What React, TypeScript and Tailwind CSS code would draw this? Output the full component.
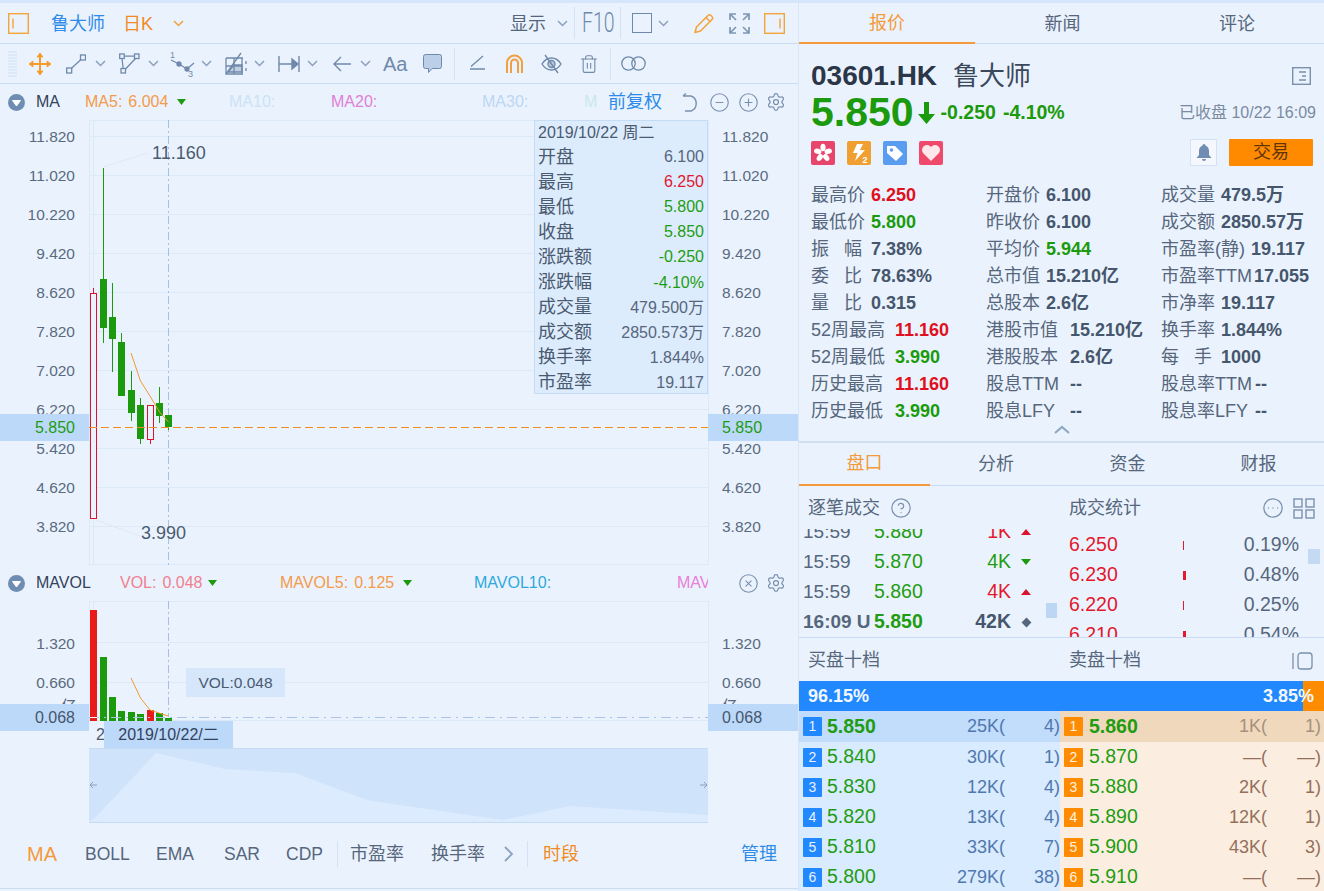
import { CircleEllipsis, CircleHelp, CircleMinus, CirclePlus, CircleX, Settings, Trash2 } from "lucide-react";
import type { ReactNode } from "react";

const axisMain = ["11.820", "11.020", "10.220", "9.420", "8.620", "7.820", "7.020", "6.220", "5.420", "4.620", "3.820"];

const candles = [
  { x: 90, top: 293, bottom: 518, high: 288, low: 519, up: true },
  { x: 100, top: 279, bottom: 328, high: 168, low: 343, up: false },
  { x: 109, top: 317, bottom: 339, high: 283, low: 372, up: false },
  { x: 118, top: 342, bottom: 396, high: 333, low: 396, up: false },
  { x: 128, top: 390, bottom: 413, high: 371, low: 421, up: false },
  { x: 137, top: 405, bottom: 439, high: 398, low: 444, up: false },
  { x: 147, top: 405, bottom: 439, high: 405, low: 444, up: true },
  { x: 156, top: 403, bottom: 416, high: 387, low: 423, up: false },
  { x: 165, top: 415, bottom: 427, high: 415, low: 430, up: false },
];

const volBars = [
  { x: 90, top: 610, up: true },
  { x: 100, top: 657, up: false },
  { x: 109, top: 697, up: false },
  { x: 118, top: 711, up: false },
  { x: 128, top: 712, up: false },
  { x: 137, top: 714, up: false },
  { x: 147, top: 710, up: true },
  { x: 156, top: 713, up: false },
  { x: 165, top: 718, up: false },
];

const tooltipRows = [
  ["开盘", "6.100", "text-[#56667c]"],
  ["最高", "6.250", "text-[#e2182e]"],
  ["最低", "5.800", "text-[#1f9c12]"],
  ["收盘", "5.850", "text-[#1f9c12]"],
  ["涨跌额", "-0.250", "text-[#1f9c12]"],
  ["涨跌幅", "-4.10%", "text-[#1f9c12]"],
  ["成交量", "479.500万", "text-[#56667c]"],
  ["成交额", "2850.573万", "text-[#56667c]"],
  ["换手率", "1.844%", "text-[#56667c]"],
  ["市盈率", "19.117", "text-[#56667c]"],
];

const DARK = "text-[#46566c]";
const RED = "text-[#e01020]";
const GREEN = "text-[#1a9a0c]";

const statRows = [
  [
    { label: "最高价", value: "6.250", color: RED, w: "w-[60px]" },
    { label: "开盘价", value: "6.100", color: DARK, w: "w-[60px]" },
    { label: "成交量", value: "479.5万", color: DARK, w: "w-[60px]" },
  ],
  [
    { label: "最低价", value: "5.800", color: GREEN, w: "w-[60px]" },
    { label: "昨收价", value: "6.100", color: DARK, w: "w-[60px]" },
    { label: "成交额", value: "2850.57万", color: DARK, w: "w-[60px]" },
  ],
  [
    { label: "振 幅", value: "7.38%", color: DARK, w: "w-[60px]" },
    { label: "平均价", value: "5.944", color: GREEN, w: "w-[60px]" },
    { label: "市盈率(静)", value: "19.117", color: DARK, w: "w-[90px]" },
  ],
  [
    { label: "委 比", value: "78.63%", color: DARK, w: "w-[60px]" },
    { label: "总市值", value: "15.210亿", color: DARK, w: "w-[60px]" },
    { label: "市盈率TTM", value: "17.055", color: DARK, w: "w-[93px]" },
  ],
  [
    { label: "量 比", value: "0.315", color: DARK, w: "w-[60px]" },
    { label: "总股本", value: "2.6亿", color: DARK, w: "w-[60px]" },
    { label: "市净率", value: "19.117", color: DARK, w: "w-[60px]" },
  ],
  [
    { label: "52周最高", value: "11.160", color: RED, w: "w-[84px]" },
    { label: "港股市值", value: "15.210亿", color: DARK, w: "w-[84px]" },
    { label: "换手率", value: "1.844%", color: DARK, w: "w-[60px]" },
  ],
  [
    { label: "52周最低", value: "3.990", color: GREEN, w: "w-[84px]" },
    { label: "港股股本", value: "2.6亿", color: DARK, w: "w-[84px]" },
    { label: "每 手", value: "1000", color: DARK, w: "w-[60px]" },
  ],
  [
    { label: "历史最高", value: "11.160", color: RED, w: "w-[84px]" },
    { label: "股息TTM", value: "--", color: DARK, w: "w-[84px]" },
    { label: "股息率TTM", value: "--", color: DARK, w: "w-[94px]" },
  ],
  [
    { label: "历史最低", value: "3.990", color: GREEN, w: "w-[84px]" },
    { label: "股息LFY", value: "--", color: DARK, w: "w-[84px]" },
    { label: "股息率LFY", value: "--", color: DARK, w: "w-[94px]" },
  ],
];

const trades = [
  { time: "15:59", price: "5.880", vol: "1K", dir: "up" },
  { time: "15:59", price: "5.870", vol: "4K", dir: "down" },
  { time: "15:59", price: "5.860", vol: "4K", dir: "up" },
  { time: "16:09 U", price: "5.850", vol: "42K", dir: "flat" },
];

const priceStats = [
  { price: "6.250", wide: false, pct: "0.19%" },
  { price: "6.230", wide: true, pct: "0.48%" },
  { price: "6.220", wide: false, pct: "0.25%" },
  { price: "6.210", wide: true, pct: "0.54%" },
];

const book = [
  { bid: "5.850", bidVol: "25K(", bidCount: "4)", ask: "5.860", askVol: "1K(", askCount: "1)" },
  { bid: "5.840", bidVol: "30K(", bidCount: "1)", ask: "5.870", askVol: "—(", askCount: "—)" },
  { bid: "5.830", bidVol: "12K(", bidCount: "4)", ask: "5.880", askVol: "2K(", askCount: "1)" },
  { bid: "5.820", bidVol: "13K(", bidCount: "4)", ask: "5.890", askVol: "12K(", askCount: "1)" },
  { bid: "5.810", bidVol: "33K(", bidCount: "7)", ask: "5.900", askVol: "43K(", askCount: "3)" },
  { bid: "5.800", bidVol: "279K(", bidCount: "38)", ask: "5.910", askVol: "—(", askCount: "—)" },
];

function Chevron({ className = "text-[#8aa0bc]" }: { className?: string }) {
  return (
    <svg width="11" height="7" viewBox="0 0 11 7" fill="none" className={className}>
      <path d="M1 1l4.5 4.5L10 1" stroke="currentColor" strokeWidth="1.5" />
    </svg>
  );
}

function Sep({ className = "h-[32px]" }: { className?: string }) {
  return <div className={`w-px bg-[#d3e2f4] ${className}`} />;
}

function DownBadge() {
  return (
    <svg width="17" height="17" viewBox="0 0 17 17">
      <circle cx="8.5" cy="8.5" r="8.5" fill="#6f8db2" />
      <path d="M4.5 6.5h8L8.5 12z" fill="#fff" stroke="#fff" strokeLinejoin="round" />
    </svg>
  );
}

function TriDown() {
  return (
    <svg width="9" height="6" viewBox="0 0 9 6">
      <path d="M0 0h9L4.5 6z" fill="#1a9a0c" />
    </svg>
  );
}

function GearIcon() {
  return <Settings size={20} strokeWidth={1.5} className="text-[#7a90ad]" />;
}

// one fixed-width slot, keeps the toolbars on their columns
function Slot({ w, children }: { w: string; children?: ReactNode }) {
  return <div className={`flex shrink-0 items-center whitespace-nowrap ${w}`}>{children}</div>;
}

function Header() {
  return (
    <div className="flex h-[41px] items-center border-b border-[#c9dcf3] pl-[8px]">
      <Slot w="w-[43px]">
        <svg width="21" height="21" viewBox="0 0 21 21" fill="none" stroke="#f5a33b" strokeWidth="1.4">
          <rect x="0.7" y="0.7" width="19.6" height="19.6" />
          <path d="M5 5.5v10" />
        </svg>
      </Slot>
      <Slot w="w-[72px]">
        <span className="translate-y-px text-[18px] text-[#2f8bea]">鲁大师</span>
      </Slot>
      <Slot w="w-[50px]">
        <span className="translate-y-px text-[18px] text-[#f08a24]">日K</span>
      </Slot>
      <Slot w="w-[337px]">
        <Chevron className="text-[#f0a040]" />
      </Slot>
      <Slot w="w-[47px]">
        <span className="translate-y-px text-[18px] text-[#56667c]">显示</span>
      </Slot>
      <Slot w="w-[17px]">
        <Chevron />
      </Slot>
      <Slot w="w-[8px]">
        <Sep />
      </Slot>
      <Slot w="w-[38px]">
        <span className="origin-left scale-x-[0.72] font-['Roboto',sans-serif] text-[27px] font-light text-[#7089aa]">F10</span>
      </Slot>
      <Slot w="w-[12px]">
        <Sep />
      </Slot>
      <Slot w="w-[26px]">
        <div className="h-[20px] w-[20px] border-[1.5px] border-[#6f89aa]" />
      </Slot>
      <Slot w="w-[35px]">
        <Chevron />
      </Slot>
      <Slot w="w-[36px]">
        <svg width="22" height="22" viewBox="0 0 22 22" fill="none" stroke="#f5a33b" strokeWidth="1.6" strokeLinejoin="round">
          <path d="M2 20.5l1.5-5.5L15 3.5a2 2 0 0 1 3 0l1 1a2 2 0 0 1 0 3L7.5 19z" />
          <path d="M13 5.5l4 4" />
        </svg>
      </Slot>
      <Slot w="w-[35px]">
        <svg width="21" height="21" viewBox="0 0 21 21" fill="none" stroke="#7e97b6" strokeWidth="1.7">
          <path d="M1 7V1h6M1 1l6 6M14 1h6v6M20 1l-6 6M1 14v6h6M1 20l6-6M14 20h6v-6M20 20l-6-6" />
        </svg>
      </Slot>
      <Slot w="w-[21px]">
        <svg width="21" height="21" viewBox="0 0 21 21" fill="none" stroke="#f5a33b" strokeWidth="1.4">
          <rect x="0.7" y="0.7" width="19.6" height="19.6" />
          <path d="M16 5.5v10" />
        </svg>
      </Slot>
    </div>
  );
}

function Toolbar() {
  const stroke = "#7089aa";
  return (
    <div className="flex h-[40px] items-center border-b border-[#c9dcf3] pl-[8px]">
      <Slot w="w-[20px]">
        <svg width="9" height="26" viewBox="0 0 9 26" stroke="#cfe0f3" strokeWidth="1">
          <path d="M0 1h9M0 4h9M0 7h9M0 10h9M0 13h9M0 16h9M0 19h9M0 22h9M0 25h9" />
        </svg>
      </Slot>
      <Slot w="w-[38px]">
        <svg width="24" height="24" viewBox="0 0 24 24" fill="#f59a2c" stroke="#f59a2c" strokeWidth="2">
          <path d="M12 3v18M3 12h18" fill="none" />
          <path d="M12 1l3 4H9zM12 23l3-4H9zM1 12l4-3v6zM23 12l-4-3v6z" strokeWidth="0.8" strokeLinejoin="round" />
        </svg>
      </Slot>
      <Slot w="w-[29px]">
        <svg width="20" height="20" viewBox="0 0 20 20" fill="none" stroke={stroke} strokeWidth="1.3">
          <rect x="0.7" y="14" width="5" height="5" />
          <rect x="14.5" y="1" width="5" height="5" />
          <path d="M5.5 14.2L14.7 5.8" />
        </svg>
      </Slot>
      <Slot w="w-[24px]">
        <Chevron />
      </Slot>
      <Slot w="w-[29px]">
        <svg width="21" height="21" viewBox="0 0 21 21" fill="none" stroke={stroke} strokeWidth="1.3">
          <rect x="0.7" y="1" width="4.5" height="4.5" />
          <rect x="15.5" y="1" width="4.5" height="4.5" />
          <rect x="2" y="15.5" width="4.5" height="4.5" />
          <path d="M5.2 3.2h10.3M3 5.5l1.2 10M16.5 5.5L6.5 16" />
        </svg>
      </Slot>
      <Slot w="w-[22px]">
        <Chevron />
      </Slot>
      <Slot w="w-[31px]">
        <svg width="26" height="26" viewBox="0 0 26 26" fill="none" stroke={stroke} strokeWidth="1.3">
          <path d="M1 9l8 4 8 5 7-6" />
          <circle cx="9" cy="13" r="2" fill={stroke} />
          <circle cx="17" cy="18" r="2" fill={stroke} />
          <text x="0" y="7" fontSize="9" fill={stroke} stroke="none">1</text>
          <text x="18" y="26" fontSize="9" fill={stroke} stroke="none">3</text>
        </svg>
      </Slot>
      <Slot w="w-[24px]">
        <Chevron />
      </Slot>
      <Slot w="w-[29px]">
        <svg width="23" height="24" viewBox="0 0 23 24" fill="none" stroke={stroke} strokeWidth="1.3">
          <path d="M1 6h17M1 6v16h17" />
          <path d="M1 22L16 1" />
          <path d="M3 20l6-7h8v7z" fill={stroke} fillOpacity="0.35" />
          <path d="M1 14h16M9 6v16M17 6v16" />
          <path d="M21 9v3M21 16v3" />
        </svg>
      </Slot>
      <Slot w="w-[24px]">
        <Chevron />
      </Slot>
      <Slot w="w-[29px]">
        <svg width="22" height="20" viewBox="0 0 22 20" fill="none" stroke={stroke} strokeWidth="1.4">
          <path d="M1 2v16M21 2v16M1 10h13" />
          <path d="M14 5l6 5-6 5z" fill={stroke} />
        </svg>
      </Slot>
      <Slot w="w-[25px]">
        <Chevron />
      </Slot>
      <Slot w="w-[28px]">
        <svg width="19" height="16" viewBox="0 0 19 16" fill="none" stroke={stroke} strokeWidth="1.4">
          <path d="M19 8H2M9 1L2 8l7 7" />
        </svg>
      </Slot>
      <Slot w="w-[23px]">
        <Chevron />
      </Slot>
      <Slot w="w-[40px]">
        <span className="text-[20px] text-[#7089aa]">Aa</span>
      </Slot>
      <Slot w="w-[31px]">
        <svg width="19" height="20" viewBox="0 0 19 20">
          <path d="M2.5 0.5h14a2 2 0 0 1 2 2v10a2 2 0 0 1-2 2H9l-3.5 4v-4h-3a2 2 0 0 1-2-2v-10a2 2 0 0 1 2-2z" fill="#bccfe8" stroke="#7089aa" />
        </svg>
      </Slot>
      <Slot w="w-[15px]">
        <Sep />
      </Slot>
      <Slot w="w-[36px]">
        <svg width="17" height="17" viewBox="0 0 17 17" fill="none" stroke={stroke} strokeWidth="1.3">
          <path d="M1 14h15M2 11.5L14 1" />
        </svg>
      </Slot>
      <Slot w="w-[36px]">
        <svg width="19" height="20" viewBox="0 0 19 20" fill="none" stroke="#f0a040" strokeWidth="2">
          <path d="M2 19V9a7.5 7.5 0 0 1 15 0v10" />
          <path d="M6 19V9a3.5 3.5 0 0 1 7 0v10" />
        </svg>
      </Slot>
      <Slot w="w-[38px]">
        <svg width="21" height="20" viewBox="0 0 21 20" fill="none" stroke={stroke} strokeWidth="1.4">
          <path d="M1 10c2.5-4 5.5-6 9.5-6s7 2 9.5 6c-2.5 4-5.5 6-9.5 6s-7-2-9.500-6z" />
          <circle cx="10.5" cy="10" r="3.5" fill={stroke} fillOpacity="0.4" />
          <path d="M4 1l13 18" />
        </svg>
      </Slot>
      <Slot w="w-[31px]">
        <Trash2 size={20} strokeWidth={1.3} className="text-[#7089aa]" />
      </Slot>
      <Slot w="w-[11px]">
        <Sep />
      </Slot>
      <Slot w="w-[30px]">
        <svg width="25" height="15" viewBox="0 0 25 15" fill="none" stroke={stroke} strokeWidth="1.3">
          <circle cx="7.5" cy="7.5" r="6.7" />
          <circle cx="17.5" cy="7.5" r="6.7" />
        </svg>
      </Slot>
    </div>
  );
}

function MaRow() {
  return (
    <div className="flex h-[36px] items-center pl-[8px] text-[16px]">
      <Slot w="w-[28px]">
        <DownBadge />
      </Slot>
      <Slot w="w-[49px]">
        <span className="text-[#33415a]">MA</span>
      </Slot>
      <Slot w="w-[92px]">
        <span className="text-[#f59a4a]">MA5:</span>
        <span className="ml-[6px] text-[#f59a4a]">6.004</span>
      </Slot>
      <Slot w="w-[52px]">
        <TriDown />
      </Slot>
      <Slot w="w-[102px]">
        <span className="text-[#cbe2f6]">MA10:</span>
      </Slot>
      <Slot w="w-[151px]">
        <span className="text-[#e080d8]">MA20:</span>
      </Slot>
      <Slot w="w-[102px]">
        <span className="text-[#bcd6f3]">MA30:</span>
      </Slot>
      <Slot w="w-[24px]">
        <span className="text-[#c8e8ea]">M</span>
      </Slot>
      <Slot w="w-[74px]">
        <span className="text-[18px] text-[#2f8bea]">前复权</span>
      </Slot>
      <Slot w="w-[27px]">
        <svg width="18" height="19" viewBox="0 0 18 19" fill="none" stroke="#7a90ad" strokeWidth="1.4">
          <path d="M1 3h8a8 8 0 0 1 0 15H3M1 3l3-2.5" />
        </svg>
      </Slot>
      <Slot w="w-[29px]">
        <CircleMinus size={21} strokeWidth={1.3} className="text-[#7a90ad]" />
      </Slot>
      <Slot w="w-[28px]">
        <CirclePlus size={21} strokeWidth={1.3} className="text-[#7a90ad]" />
      </Slot>
      <Slot w="w-[20px]">
        <GearIcon />
      </Slot>
    </div>
  );
}

function VolRow() {
  return (
    <div className="flex h-[36px] items-center pl-[8px] text-[16px]">
      <Slot w="w-[28px]">
        <DownBadge />
      </Slot>
      <Slot w="w-[84px]">
        <span className="text-[#33415a]">MAVOL</span>
      </Slot>
      <Slot w="w-[88px]">
        <span className="text-[#f0808f]">VOL:</span>
        <span className="ml-[6px] text-[#f0808f]">0.048</span>
      </Slot>
      <Slot w="w-[72px]">
        <TriDown />
      </Slot>
      <Slot w="w-[123px]">
        <span className="text-[#f59a4a]">MAVOL5:</span>
        <span className="ml-[6px] text-[#f59a4a]">0.125</span>
      </Slot>
      <Slot w="w-[71px]">
        <TriDown />
      </Slot>
      <Slot w="w-[203px]">
        <span className="text-[#2fa8df]">MAVOL10:</span>
      </Slot>
      <Slot w="w-[61px]">
        <span className="w-[31px] overflow-hidden text-[#e880d8]">MAV</span>
      </Slot>
      <Slot w="w-[28px]">
        <CircleX size={21} strokeWidth={1.3} className="text-[#7a90ad]" />
      </Slot>
      <Slot w="w-[20px]">
        <GearIcon />
      </Slot>
    </div>
  );
}

function MainChart() {
  return (
    <div className="relative h-[445px]">
      <svg width="798" height="445" viewBox="0 120 798 445" className="block">
        {axisMain.map((_, i) => (
          <line key={i} x1="89" x2="708" y1={136.5 + i * 39} y2={136.5 + i * 39} stroke="#dce9f8" />
        ))}
        <path d="M89 120.5H708M89 564.5H708M89.5 120V565M93.5 120V565M708.5 120V565" stroke="#dce9f8" fill="none" />
        {axisMain.map((v, i) => (
          <g key={v} fontSize="15.5" className="fill-[#5a6a80]">
            <text x={75} y={141.5 + i * 39} textAnchor="end">{v}</text>
            <text x={722} y={141.5 + i * 39}>{v}</text>
          </g>
        ))}
        <rect x="0" y="414" width="89" height="27" fill="#bcd9fa" />
        <rect x="708" y="414" width="90" height="27" fill="#bcd9fa" />
        <text x="75" y="432.5" textAnchor="end" fontSize="16" className="fill-[#1f9c12]">5.850</text>
        <text x="722" y="432.5" fontSize="16" className="fill-[#1f9c12]">5.850</text>
        <path d="M168.5 120V565" stroke="#a9bfdb" strokeDasharray="8 3 2 3" />
        <path d="M103 167L148 153M96 520L140 536" stroke="#dfe9f5" />
        {candles.map((c) => {
          const mid = c.x + 3.5;
          const color = c.up ? "#d9142c" : "#1a9a0c";
          return (
            <g key={c.x}>
              <line x1={mid} x2={mid} y1={c.high} y2={c.low} stroke={color} strokeWidth="1" />
              {c.up ? (
                <rect x={c.x + 0.5} y={c.top + 0.5} width="6" height={c.bottom - c.top} fill="#eaf3fd" stroke={color} />
              ) : (
                <rect x={c.x} y={c.top} width="7" height={c.bottom - c.top} fill={color} />
              )}
            </g>
          );
        })}
        <polyline points="131,353 140.5,381 150,396 159.5,412 168.5,422" fill="none" stroke="#f09a30" />
        <line x1="89" x2="708" y1="427.5" y2="427.5" stroke="#f28c1e" strokeDasharray="8 4" />
        <text x="152" y="159" fontSize="18" className="fill-[#4a5a70]">11.160</text>
        <text x="141" y="539" fontSize="18" className="fill-[#4a5a70]">3.990</text>
      </svg>
      <div className="absolute top-0 left-[534px] h-[274px] w-[174px] border border-[#c6dcf4] bg-[#ddecfd] px-[3px] text-[#4a5a70]">
        <div className="flex h-[23.5px] items-center text-[16px]">2019/10/22 周二</div>
        {tooltipRows.map(([label, value, color]) => (
          <div key={label} className="flex h-[25.1px] items-center justify-between">
            <span className="text-[18px]">{label}</span>
            <span className={`text-[16px] ${color}`}>{value}</span>
          </div>
        ))}
      </div>
    </div>
  );
}

function VolChart() {
  return (
    <div className="relative h-[120px]">
      <svg width="798" height="120" viewBox="0 601 798 120" className="block">
        <path d="M89 601.5H708M89 642.5H708M89 682.5H708M89 720.5H708M89.5 601V721M93.5 601V721M708.5 601V721" stroke="#dce9f8" fill="none" />
        <g fontSize="15.5" className="fill-[#5a6a80]">
          <text x="75" y="648.5" textAnchor="end">1.320</text>
          <text x="75" y="687.5" textAnchor="end">0.660</text>
          <text x="61" y="712">亿</text>
          <text x="722" y="648.5">1.320</text>
          <text x="722" y="687.5">0.660</text>
          <text x="722" y="712">亿</text>
        </g>
        <path d="M168.5 601V717" stroke="#a9bfdb" strokeDasharray="8 3 2 3" />
        {volBars.map((b) => (
          <rect key={b.x} x={b.x} y={b.top} width="7" height={721 - b.top} fill={b.up ? "#e81a1a" : "#1a9a0c"} />
        ))}
        <polyline points="131,678 140.5,698 150,710 159,713 168,716" fill="none" stroke="#f09a30" />
        <path d="M89 717.5H708" stroke="#a9c3e6" strokeDasharray="10 5 2 5" />
        <path d="M90 717.5H97" stroke="#fff" />
      </svg>
      <div className="absolute top-[67px] left-[186px] flex h-[29px] w-[99px] items-center justify-center bg-[#d6e7fb] text-[15.5px] text-[#4a5a70]">
        VOL:0.048
      </div>
      <div className="absolute top-[103px] left-0 flex h-[27px] w-[89px] items-center justify-end bg-[#bcd9fa] pr-[14px] text-[16px] text-[#46566c]">
        0.068
      </div>
      <div className="absolute top-[103px] left-[708px] flex h-[27px] w-[90px] items-center bg-[#bcd9fa] pl-[14px] text-[16px] text-[#46566c]">
        0.068
      </div>
    </div>
  );
}

function DateRow() {
  return (
    <div className="flex h-[27px] items-center pl-[96px] text-[16px] text-[#4a5a70]">
      <span className="w-[8px] overflow-hidden">2</span>
      <div className="flex h-full w-[129px] items-center justify-center bg-[#bcd9fa] text-[#33415a]">2019/10/22/二</div>
    </div>
  );
}

function Slider() {
  return (
    <div className="ml-[89px] h-[75px] w-[619px] border-y border-[#c5daf3] bg-[#cfe3fb]">
      <svg width="619" height="73" viewBox="89 749 619 73" className="block">
        <path d="M89 822L95 818L156 753L225 769L295 773L367 800L400 805L503 820L570 806L708 815V822Z" fill="#dcebfd" />
        <path d="M97 785H90M90 785l3-3M90 785l3 3M700 785H707M707 785l-3-3M707 785l-3 3" stroke="#8aa0bc" fill="none" />
      </svg>
    </div>
  );
}

function BottomTabs() {
  const latin = "text-[17.5px] text-[#56667c]";
  const cjk = "text-[18px] text-[#56667c]";
  return (
    <div className="flex h-[66px] items-center border-b border-[#c9dcf3] pb-[3px] pl-[27px]">
      <Slot w="w-[58px]">
        <span className="text-[20px] text-[#f59a3a]">MA</span>
      </Slot>
      <Slot w="w-[71px]"><span className={latin}>BOLL</span></Slot>
      <Slot w="w-[68px]"><span className={latin}>EMA</span></Slot>
      <Slot w="w-[62px]"><span className={latin}>SAR</span></Slot>
      <Slot w="w-[51px]"><span className={latin}>CDP</span></Slot>
      <Slot w="w-[13px]"><Sep className="h-[26px]" /></Slot>
      <Slot w="w-[81px]"><span className={cjk}>市盈率</span></Slot>
      <Slot w="w-[73px]"><span className={cjk}>换手率</span></Slot>
      <Slot w="w-[23px]">
        <svg width="10" height="16" viewBox="0 0 10 16" fill="none" stroke="#8aa0bc" strokeWidth="1.8">
          <path d="M1 1l7 7-7 7" />
        </svg>
      </Slot>
      <Slot w="w-[16px]"><Sep className="h-[26px]" /></Slot>
      <Slot w="w-[198px]"><span className="text-[18px] text-[#f08a24]">时段</span></Slot>
      <Slot w="w-[40px]"><span className="text-[18px] text-[#2f8bea]">管理</span></Slot>
    </div>
  );
}

function QuoteHead() {
  return (
    <div className="px-[12px] pt-[13px]">
      <div className="flex h-[38px] items-center text-[#2b3648]">
        <span className="text-[28px] font-bold">03601.HK</span>
        <span className="ml-[16px] text-[26px] text-[#3b485c]">鲁大师</span>
        <svg width="19" height="18" viewBox="0 0 19 18" fill="none" stroke="#7a90ad" strokeWidth="1.4" className="ml-auto mr-[1px]">
          <rect x="0.7" y="0.7" width="17.6" height="16.6" />
          <path d="M7 5h7M10 9h4M7 13h7" />
        </svg>
      </div>
      <div className="flex h-[36px] items-center">
        <span className="text-[41px] font-bold text-[#1a9a0c]">5.850</span>
        <svg width="19" height="22" viewBox="0 0 19 22" className="ml-[3px]">
          <path d="M7 0h5v12h6l-8.5 10L1 12h6z" fill="#1a9a0c" />
        </svg>
        <span className="ml-[5px] text-[19.5px] font-bold text-[#1a9a0c]">-0.250</span>
        <span className="ml-[7px] text-[19.5px] font-bold text-[#1a9a0c]">-4.10%</span>
        <span className="ml-auto -mr-[4px] text-[16px] text-[#7a8aa0]">已收盘 10/22 16:09</span>
      </div>
      <div className="mt-[8px] flex h-[27px] items-center">
        <div className="flex h-[24px] w-[24px] items-center justify-center rounded-[2px] bg-[#e8456c]">
          <svg width="20" height="20" viewBox="0 0 20 20" fill="#fff">
            {[0, 72, 144, 216, 288].map((deg) => (
              <ellipse key={deg} cx="10" cy="4.5" rx="2.6" ry="3.8" transform={`rotate(${deg} 10 10)`} />
            ))}
          </svg>
        </div>
        <div className="ml-[12px] flex h-[24px] w-[24px] items-center justify-center rounded-[2px] bg-[#f0a030]">
          <svg width="22" height="22" viewBox="0 0 22 22">
            <path d="M9 2h6l-3 6h5L7 19l2.5-8H5z" fill="#fff" />
            <text x="14.5" y="20.5" fontSize="9" fontWeight="bold" fill="#fff">2</text>
          </svg>
        </div>
        <div className="ml-[12px] flex h-[24px] w-[24px] items-center justify-center rounded-[2px] bg-[#5a9cf0]">
          <svg width="20" height="20" viewBox="0 0 20 20">
            <path d="M2 3h8l8 8-7 7-9-8z" fill="#fff" />
            <circle cx="6.5" cy="7" r="1.8" fill="#5a9cf0" />
          </svg>
        </div>
        <div className="ml-[12px] flex h-[24px] w-[24px] items-center justify-center rounded-[2px] bg-[#f04a6a]">
          <svg width="20" height="18" viewBox="0 0 20 18">
            <path d="M10 17L2 9a5 5 0 0 1 8-6 5 5 0 0 1 8 6z" fill="#ffe8ea" />
          </svg>
        </div>
        <div className="ml-auto flex h-[27px] w-[27px] items-center justify-center border border-[#d3e2f4] bg-[#f4f8fe]">
          <svg width="16" height="18" viewBox="0 0 16 18" fill="#6f8db2">
            <path d="M8 0a1.5 1.5 0 0 1 1.5 1.5C12 2.5 13 4.5 13 7v4l2.5 3H.5L3 11V7c0-2.5 1-4.5 3.5-5.5A1.5 1.5 0 0 1 8 0z" />
            <path d="M6 15h4a2 2 0 0 1-4 0z" />
          </svg>
        </div>
        <div className="ml-[12px] mr-[-1px] flex h-[27px] w-[84px] items-center justify-center rounded-[1px] bg-[#ff8a00] text-[18px] text-[#5f3608]">
          交易
        </div>
      </div>
    </div>
  );
}

function Stats() {
  return (
    <div className="mt-[16px] pl-[12px]">
      {statRows.map((row, i) => (
        <div key={i} className="grid h-[27px] grid-cols-[175px_175px_1fr] items-center">
          {row.map((s) => (
            <div key={s.label} className="flex items-center whitespace-nowrap">
              <div className={`shrink-0 ${s.w}`}>
                {s.label.includes(" ") ? (
                  <span className="flex w-[51px] justify-between text-[18px] text-[#56667c]">
                    <span>{s.label.split(" ")[0]}</span>
                    <span>{s.label.split(" ")[1]}</span>
                  </span>
                ) : (
                  <span className="text-[18px] text-[#56667c]">{s.label}</span>
                )}
              </div>
              <span className={`text-[18px] font-bold ${s.color}`}>{s.value}</span>
            </div>
          ))}
        </div>
      ))}
    </div>
  );
}

function TradeArrow({ dir }: { dir: string }) {
  if (dir === "up") return <div className="h-0 w-0 border-x-[5.5px] border-b-[6px] border-x-transparent border-b-[#d9142c]" />;
  if (dir === "down") return <div className="h-0 w-0 border-x-[5.5px] border-t-[6px] border-x-transparent border-t-[#1a9a0c]" />;
  return <div className="ml-[2px] h-[7px] w-[7px] rotate-45 bg-[#56667c]" />;
}

function Trades() {
  return (
    <div className="flex h-[108px] overflow-hidden">
      <div className="relative -mt-[12px] h-[120px] w-[261px] text-[19.5px]">
        {trades.map((t) => {
          const last = t.dir === "flat";
          return (
            <div key={t.time + t.price} className={`flex h-[30px] items-center pl-[4px] ${last ? "font-bold" : ""}`}>
              <span className="w-[71px] whitespace-nowrap text-[19px] text-[#56667c]">{t.time}</span>
              <span className="w-[60px] text-[#1f9c12]">{t.price}</span>
              <span
                className={`w-[77px] text-right ${last ? "text-[#46566c]" : t.dir === "up" ? "text-[#e2182e]" : "text-[#1f9c12]"}`}
              >
                {t.vol}
              </span>
              <div className="ml-[10px]">
                <TradeArrow dir={t.dir} />
              </div>
            </div>
          );
        })}
        <div className="absolute top-[86px] left-[247px] h-[15px] w-[11px] bg-[#bcd6f3]" />
      </div>
      <div className="relative flex-1 pt-[1px] text-[19.5px]">
        {priceStats.map((p) => (
          <div key={p.price} className="flex h-[30px] items-center pl-[9px]">
            <span className="w-[114px] text-[#e2182e]">{p.price}</span>
            <div className="w-[56px]">
              <div className={`h-[9px] bg-[#e2182e] ${p.wide ? "w-[3px]" : "w-px"}`} />
            </div>
            <span className="w-[60px] text-right text-[#56667c]">{p.pct}</span>
          </div>
        ))}
        <div className="absolute top-[20px] left-[248px] h-[15px] w-[12px] bg-[#c4daf3]" />
      </div>
    </div>
  );
}

function BookRow({ row, index }: { row: (typeof book)[number]; index: number }) {
  const first = index === 0;
  return (
    <div className={`flex items-center text-[19.5px] ${first ? "h-[31px]" : "h-[30px]"}`}>
      <div className={`flex h-full w-[261px] items-center ${first ? "bg-[#c2dcfb]" : "bg-[#d9ebfe]"}`}>
        <div className="ml-[4px] flex h-[19px] w-[19px] items-center justify-center rounded-[1px] bg-[#2288ff] text-[14px] text-[#e8f2ff]">
          {index + 1}
        </div>
        <span className={`ml-[5px] w-[100px] text-[#1f9c12] ${first ? "font-bold" : ""}`}>{row.bid}</span>
        <span className="w-[78px] text-right text-[18px] text-[#5078b0]">{row.bidVol}</span>
        <span className="w-[55px] text-right text-[18px] text-[#5078b0]">{row.bidCount}</span>
      </div>
      <div className={`flex h-full flex-1 items-center ${first ? "bg-[#f0d8bc]" : "bg-[#fbeee0]"}`}>
        <div className="ml-[4px] flex h-[19px] w-[19px] items-center justify-center rounded-[1px] bg-[#ff8c00] text-[14px] text-[#fff3e0]">
          {index + 1}
        </div>
        <span className={`ml-[6px] w-[100px] text-[#1f9c12] ${first ? "font-bold" : ""}`}>{row.ask}</span>
        <span className={`w-[78px] text-right text-[18px] ${first ? "text-[#a5917e]" : "text-[#94705c]"}`}>{row.askVol}</span>
        <span className={`w-[54px] text-right text-[18px] ${first ? "text-[#a5917e]" : "text-[#94705c]"}`}>{row.askCount}</span>
      </div>
    </div>
  );
}

function RightPane() {
  return (
    <div className="w-[525px] shrink-0">
      <div className="flex h-[41px] border-b border-[#c9dcf3] text-[18px] text-[#56667c]">
        <div className="-mb-px flex w-[176px] items-center justify-center border-b-2 border-[#f59a3a] pt-[2px] text-[#f59a3a]">报价</div>
        <div className="flex w-[175px] items-center justify-center pt-[2px]">新闻</div>
        <div className="flex w-[174px] items-center justify-center pt-[2px]">评论</div>
      </div>
      <QuoteHead />
      <Stats />
      <div className="flex h-[16px] items-start justify-center">
        <svg width="16" height="9" viewBox="0 0 16 9" fill="none" stroke="#8fa8c4" strokeWidth="2.2">
          <path d="M1 8l7-6 7 6" />
        </svg>
      </div>
      <div className="flex h-[45px] border-t-2 border-[#cfe0f3] text-[18px] text-[#56667c]">
        <div className="flex w-[131px] items-center justify-center border-b-2 border-[#f59a3a] text-[#f59a3a]">盘口</div>
        <div className="flex w-[132px] items-center justify-center border-b border-[#c9dcf3]">分析</div>
        <div className="flex w-[131px] items-center justify-center border-b border-[#c9dcf3]">资金</div>
        <div className="flex w-[131px] items-center justify-center border-b border-[#c9dcf3]">财报</div>
      </div>
      <div className="flex h-[43px] items-center pl-[9px] pt-[1px] text-[18px] text-[#56667c]">
        <span className="w-[82px]">逐笔成交</span>
        <CircleHelp size={22} strokeWidth={1.3} className="text-[#7a90ad]" />
        <span className="ml-[157px] w-[193px]">成交统计</span>
        <CircleEllipsis size={22} strokeWidth={1.4} className="text-[#7a90ad]" />
        <svg width="22" height="21" viewBox="0 0 22 21" fill="none" stroke="#7a90ad" strokeWidth="1.4" className="ml-[9px]">
          <rect x="1" y="1" width="8" height="8" />
          <rect x="13" y="1" width="8" height="8" />
          <rect x="1" y="12" width="8" height="8" />
          <rect x="13" y="12" width="8" height="8" />
        </svg>
      </div>
      <Trades />
      <div className="flex h-[44px] items-center border-t border-[#c9dcf3] pl-[9px] pt-[2px] text-[18px] text-[#56667c]">
        <span className="w-[261px]">买盘十档</span>
        <span className="w-[223px]">卖盘十档</span>
        <svg width="21" height="18" viewBox="0 0 21 18" fill="none" stroke="#7a90ad" strokeWidth="1.3">
          <path d="M1 1v16" />
          <rect x="6" y="1" width="14" height="16" rx="3" />
        </svg>
      </div>
      <div className="relative flex h-[30px] items-center bg-[#2288ff] text-[18px] font-bold text-[#f2f8ff]">
        <span className="ml-[9px]">96.15%</span>
        <div className="absolute top-0 right-0 h-full w-[21px] bg-[#ff8c00]" />
        <span className="relative ml-auto mr-[10px]">3.85%</span>
      </div>
      {book.map((row, i) => (
        <BookRow key={row.bid} row={row} index={i} />
      ))}
    </div>
  );
}

export default function App() {
  return (
    <div className="relative h-[891px] w-[1324px] overflow-hidden bg-[#eaf3fd] font-['Liberation_Sans','Noto_Sans_CJK_SC',sans-serif]">
      <div className="h-[3px] bg-[#d5e6fb]" />
      <div className="flex">
        <div className="w-[799px] shrink-0 border-r border-[#d8e6f6]">
          <Header />
          <Toolbar />
          <MaRow />
          <MainChart />
          <VolRow />
          <VolChart />
          <DateRow />
          <Slider />
          <BottomTabs />
        </div>
        <RightPane />
      </div>
    </div>
  );
}
